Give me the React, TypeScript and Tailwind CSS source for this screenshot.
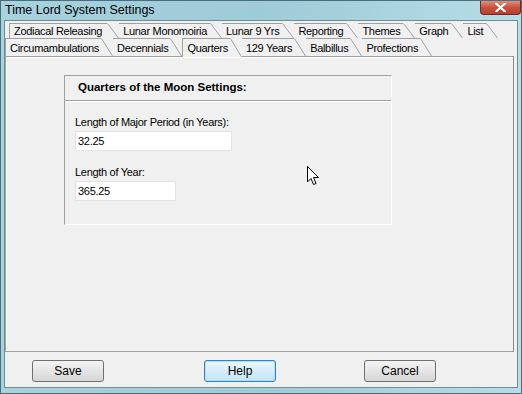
import React from 'react';

const backTabs = ['Zodiacal Releasing', 'Lunar Monomoiria', 'Lunar 9 Yrs', 'Reporting', 'Themes', 'Graph', 'List'];
const frontTabs = ['Circumambulations', 'Decennials', 'Quarters', '129 Years', 'Balbillus', 'Profections'];
const selected = 'Quarters';

function Slant({ h }: { h: number }) {
  return (
    <svg width="12" height={h} className="shrink-0 block">
      <line x1="0.5" y1="0.5" x2="11.5" y2={h} stroke="#a0a0a0" strokeWidth="1" />
    </svg>
  );
}

function BackTab({ label, first }: { label: string; first?: boolean }) {
  return (
    <div className="flex h-[15px]">
      <div
        className={`border-t border-[#a0a0a0] pr-[3px] leading-[15px] ${first ? 'border-l pl-[4px] pr-[5px]' : 'pl-[4px]'}`}
      >
        {label}
      </div>
      <Slant h={15} />
    </div>
  );
}

function FrontTab({ label, first }: { label: string; first?: boolean }) {
  const active = label === selected;
  return (
    <div className={`flex h-[18px] ${active ? 'relative z-10 -mb-px h-[19px] bg-[#f0f0f0]' : ''}`}>
      <div
        className={`border-t border-[#a0a0a0] pl-[4px] pr-[2px] leading-[18px] ${first || active ? 'border-l' : ''}`}
      >
        {label}
      </div>
      <Slant h={active ? 19 : 18} />
    </div>
  );
}

function Button({ label, primary }: { label: string; primary?: boolean }) {
  return (
    <button
      className={`w-[72px] h-[22px] rounded-[3px] border text-[12px] text-black ${
        primary
          ? 'border-[#3c7fb1] bg-linear-to-b from-[#eaf6fd] to-[#c4e5f6] shadow-[inset_0_0_0_1px_#a6e0fb]'
          : 'border-[#707070] bg-linear-to-b from-[#f4f4f4] to-[#d6d6d6]'
      }`}
    >
      {label}
    </button>
  );
}

export default function App() {
  return (
    <div className="relative w-[522px] h-[394px] flex flex-col bg-linear-to-r from-[#a7d2de] via-[#9dcbd7] to-[#b7dde6] border border-[#4a6f7a] font-['Liberation_Sans',Arial,sans-serif] text-black overflow-hidden">
      {/* title bar */}
      <div className="h-[19px] flex items-start justify-between shrink-0">
        <span className="pl-[4px] pt-[1px] text-[12.5px] leading-[16px]">Time Lord System Settings</span>
        <div className="w-[41px] h-[14px] rounded-b-[4px] border border-t-0 border-[#6b2a22] bg-linear-to-b from-[#e08e7e] via-[#c9503c] to-[#b8402c] flex items-center justify-center">
          <svg width="11" height="9" viewBox="0 0 11 9">
            <path d="M1 0.5 L10 8.5 M10 0.5 L1 8.5" stroke="#fff" strokeWidth="2.2" strokeLinecap="square" />
          </svg>
        </div>
      </div>

      {/* client area */}
      <div className="flex-1 mx-[3px] mb-[5px] bg-[#f0f0f0] border border-[#6d8d96] flex flex-col text-[11px] tracking-[-0.3px]">
        <div className="pt-[2px] pl-[4px] flex">
          {backTabs.map((t, i) => (
            <BackTab key={t} label={t} first={i === 0} />
          ))}
        </div>
        <div className="flex">
          {frontTabs.map((t, i) => (
            <FrontTab key={t} label={t} first={i === 0} />
          ))}
        </div>

        {/* tab panel */}
        <div className="h-[296px] mr-[3px] border border-[#a0a0a0] border-r-[#8a8a8a] shadow-[inset_1px_1px_0_#ffffff]">
          <div className="ml-[58px] mt-[18px] w-[328px] h-[150px] border border-t-[#a0a0a0] border-l-[#a0a0a0] border-r-white border-b-white flex flex-col">
            <div className="h-[25px] border-b border-[#a0a0a0] shadow-[0_1px_0_#ffffff] pl-[13px] flex items-center font-bold text-[11.5px] tracking-normal">
              Quarters of the Moon Settings:
            </div>
            <div className="pl-[10px] pt-[14px] flex flex-col">
              <span className="leading-[14px]">Length of Major Period (in Years):</span>
              <div className="mt-[2px] w-[157px] h-[20px] bg-white border border-[#e4e4e4] pl-[2px] leading-[18px]">32.25</div>
              <span className="mt-[14px] leading-[14px]">Length of Year:</span>
              <div className="mt-[2px] w-[101px] h-[20px] bg-white border border-[#e4e4e4] pl-[2px] leading-[18px]">365.25</div>
            </div>
          </div>
        </div>

        {/* buttons */}
        <div className="flex items-center pt-[8px] pl-[27px] tracking-normal">
          <Button label="Save" />
          <div className="w-[100px]" />
          <Button label="Help" primary />
          <div className="w-[88px]" />
          <Button label="Cancel" />
        </div>
      </div>

      {/* mouse cursor */}
      <svg className="absolute left-[306px] top-[165px]" width="13" height="20" viewBox="0 0 13 20">
        <path d="M0.5 0.5 L0.5 16 L4 12.5 L6.5 18.5 L9 17.5 L6.5 11.5 L11.5 11.5 Z" fill="#fff" stroke="#000" strokeWidth="1" strokeLinejoin="miter" />
      </svg>
    </div>
  );
}
